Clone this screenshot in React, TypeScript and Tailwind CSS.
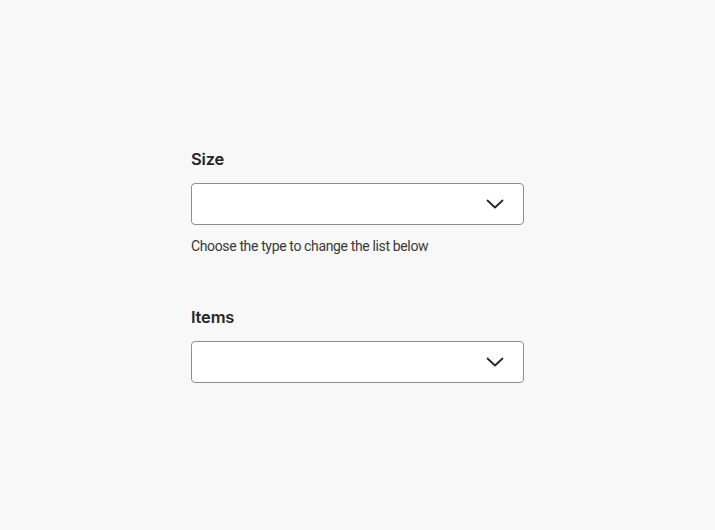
import React from 'react';

function Chevron() {
  return (
    <svg width="18" height="10" viewBox="0 0 18 10" fill="none" className="shrink-0">
      <path d="M1.5 1.5 L9 8.5 L16.5 1.5" stroke="#262626" strokeWidth="1.8" strokeLinecap="round" strokeLinejoin="round" />
    </svg>
  );
}

interface SelectFieldProps {
  label: string;
  helper?: string;
}

function SelectField({ label, helper }: SelectFieldProps) {
  return (
    <div className="flex flex-col">
      <label className="text-[16.5px] font-semibold leading-[24px] text-[#262626] mb-[12px] tracking-[-0.2px]">{label}</label>
      <button
        type="button"
        className="h-[42px] w-full rounded-[4px] border border-[#8d8d8d] bg-white flex items-center justify-end pr-[19px]"
      >
        <Chevron />
      </button>
      {helper && (
        <p
          className="mt-[12px] text-[14px] leading-[18px] text-[#393939] tracking-[-0.36px]"
          style={{ fontFamily: 'Roboto, sans-serif' }}
        >
          {helper}
        </p>
      )}
    </div>
  );
}

export default function App() {
  return (
    <div
      className="min-h-screen bg-[#f8f8f8] flex items-center justify-center"
      style={{ fontFamily: 'Inter, "Noto Sans", sans-serif' }}
    >
      <div className="w-[333px] flex flex-col gap-[50px]">
        <SelectField label="Size" helper="Choose the type to change the list below" />
        <SelectField label="Items" />
      </div>
    </div>
  );
}
